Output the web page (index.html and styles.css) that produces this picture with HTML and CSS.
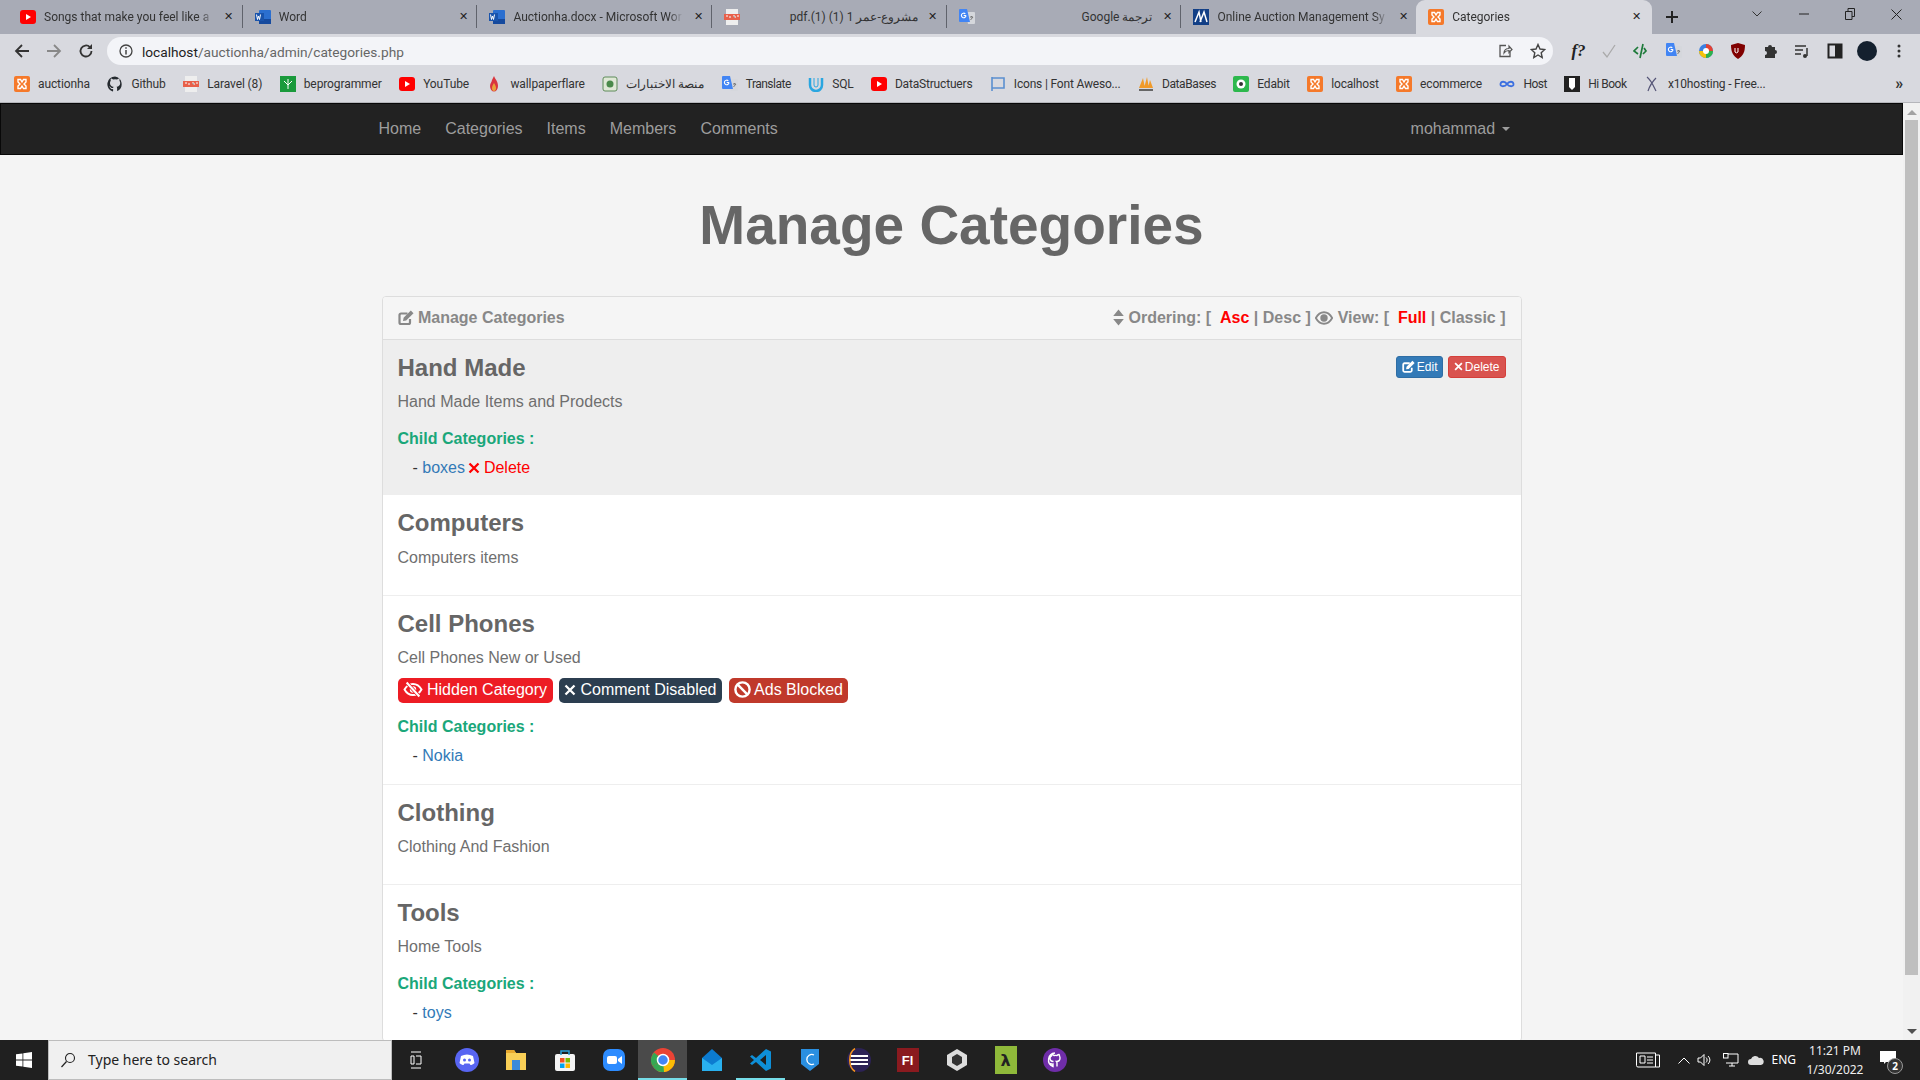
FILE: index.html
```html
<!DOCTYPE html>
<html lang="en">
<head>
<meta charset="utf-8">
<title>Categories</title>
<link rel="stylesheet" href="styles.css">
</head>
<body>
<svg class="defs" width="0" height="0" aria-hidden="true">
  <symbol id="xampp" viewBox="0 0 16 16"><rect width="16" height="16" rx="2" fill="#f5792a"/><path d="M4 3.500h2.500L8 6l1.500-2.500H12v2.500L10 8l2 2v2.500H9.500L8 10l-1.500 2.500H4V10l2-2-2-2z" fill="none" stroke="#fff" stroke-width="1.400"/></symbol>
  <symbol id="yt" viewBox="0 0 16 16"><rect y="1" width="16" height="14" rx="3" fill="#f00"/><path d="M6 5v6l5-3z" fill="#fff"/></symbol>
  <symbol id="word" viewBox="0 0 16 16"><rect x="4" y="1" width="12" height="14" rx="1" fill="#2b6fd0"/><rect x="4" y="10" width="12" height="5" fill="#164a9e"/><rect y="4" width="9" height="8" fill="#1a54ac"/><path d="M1.500 5.500l1 5 1-3.500 1 3.500 1-5" fill="none" stroke="#fff"/></symbol>
  <symbol id="pdf" viewBox="0 0 16 16"><rect x="2" width="12" height="16" fill="#eee"/><rect y="5" width="16" height="6" fill="#e8604a"/><path d="M2 7h2M6 7v2M9 7h2v2M13 7h2" stroke="#fff"/></symbol>
  <symbol id="gt" viewBox="0 0 16 16"><path d="M7 3h8a1 1 0 0 1 1 1v10a1 1 0 0 1-1 1H9z" fill="#d5d7dc"/><path d="M1 0h7l3 13H1a1 1 0 0 1-1-1V1a1 1 0 0 1 1-1z" fill="#4285f4"/><path d="M7 6.500a2.300 2.300 0 1 1-.7-1.700M4.700 6.500H7" fill="none" stroke="#fff" stroke-width="1.100"/><path d="M11 8h3M12.500 7v1M11.500 11l2.500-3" stroke="#777"/></symbol>
  <symbol id="edit" viewBox="0 0 16 16"><path d="M12 9.500V13a1.500 1.500 0 0 1-1.500 1.500H3A1.500 1.500 0 0 1 1.500 13V5.500A1.500 1.500 0 0 1 3 4h6.500" fill="none" stroke="currentColor" stroke-width="2.200"/><path d="M5 11.500l.6-3.200L12.800 1l2.700 2.700-7.300 7.300z" fill="currentColor"/></symbol>
  <symbol id="times" viewBox="0 0 12 12"><path d="M1.500 1.500l9 9M10.500 1.500l-9 9" stroke="currentColor" stroke-width="2.300" fill="none"/></symbol>
  <symbol id="sort" viewBox="0 0 10 16"><path d="M5 .5l5 6H0zM5 15.500l-5-6h10z" fill="currentColor"/></symbol>
  <symbol id="eye" viewBox="0 0 18 14"><path d="M.8 7C3 3 6 1.200 9 1.200S15 3 17.200 7C15 11 12 12.800 9 12.800S3 11 .8 7z" fill="none" stroke="currentColor" stroke-width="1.900"/><circle cx="9" cy="7" r="3.700" fill="currentColor"/></symbol>
  <symbol id="eyeoff" viewBox="0 0 18 16"><path d="M1 8c2-3.600 5-5.200 8-5.200S15 4.400 17 8c-2 3.600-5 5.200-8 5.200S3 11.600 1 8z" fill="none" stroke="currentColor" stroke-width="1.800"/><circle cx="9" cy="8" r="3" fill="currentColor"/><path d="M2.500 1l13 14" stroke="#ed1c24" stroke-width="3.500"/><path d="M3 1.500l12 13" stroke="currentColor" stroke-width="2"/></symbol>
  <symbol id="ban" viewBox="0 0 16 16"><circle cx="8" cy="8" r="6.700" fill="none" stroke="currentColor" stroke-width="2.300"/><path d="M3.500 3.500l9 9" stroke="currentColor" stroke-width="2.300"/></symbol>
</svg>

<header class="chrome">
  <div class="tabstrip">
    <div class="tab"><svg class="fav"><use href="#yt"/></svg><span class="tab-title">Songs that make you feel like a</span><span class="tab-x">✕</span></div>
    <div class="tab"><svg class="fav"><use href="#word"/></svg><span class="tab-title">Word</span><span class="tab-x">✕</span></div>
    <div class="tab"><svg class="fav"><use href="#word"/></svg><span class="tab-title">Auctionha.docx - Microsoft Wor</span><span class="tab-x">✕</span></div>
    <div class="tab"><svg class="fav"><use href="#pdf"/></svg><span class="tab-title rtl" dir="rtl">مشروع-عمر 1 (1) (1).pdf</span><span class="tab-x">✕</span></div>
    <div class="tab"><svg class="fav"><use href="#gt"/></svg><span class="tab-title rtl" dir="rtl">ترجمة Google</span><span class="tab-x">✕</span></div>
    <div class="tab tab-last"><svg class="fav" viewBox="0 0 16 16"><rect width="16" height="16" fill="#123f86"/><path d="M2 13L6 3l2 10M7 13l4-10 3 10" fill="none" stroke="#fff" stroke-width="1.500"/></svg><span class="tab-title">Online Auction Management Sy</span><span class="tab-x">✕</span></div>
    <div class="tab tab-active"><svg class="fav"><use href="#xampp"/></svg><span class="tab-title">Categories</span><span class="tab-x">✕</span></div>
    <div class="newtab"><svg width="12" height="12" viewBox="0 0 12 12"><path d="M6 0v12M0 6h12" stroke="#222" stroke-width="2"/></svg></div>
    <div class="winctl">
      <span class="wc"><svg width="10" height="6" viewBox="0 0 10 6"><path d="M.5.5L5 5 9.500.5" fill="none" stroke="#333"/></svg></span>
      <span class="wc"><svg width="10" height="2" viewBox="0 0 10 2"><path d="M0 1h10" stroke="#222"/></svg></span>
      <span class="wc"><svg width="10" height="12" viewBox="0 0 10 12"><path d="M.5 3.500h6.500v8H.5zM3 3.500V.5h6.500v8H7" fill="none" stroke="#222"/></svg></span>
      <span class="wc"><svg width="11" height="11" viewBox="0 0 11 11"><path d="M.5.5l10 10M10.500.5l-10 10" stroke="#222"/></svg></span>
    </div>
  </div>
  <div class="toolbar">
    <div class="navbtns">
      <svg class="tb" viewBox="0 0 16 16"><path d="M15 8H2M8 2L2 8l6 6" fill="none" stroke="#333" stroke-width="1.800"/></svg>
      <svg class="tb" viewBox="0 0 16 16"><path d="M1 8h13M8 2l6 6-6 6" fill="none" stroke="#888" stroke-width="1.800"/></svg>
      <svg class="tb" viewBox="0 0 16 16"><path d="M13.500 8a5.500 5.500 0 1 1-1.600-3.900" fill="none" stroke="#333" stroke-width="1.800"/><path d="M14 1v5H9z" fill="#333"/></svg>
    </div>
    <div class="omnibox">
      <svg class="info" viewBox="0 0 14 14"><circle cx="7" cy="7" r="6" fill="none" stroke="#444" stroke-width="1.300"/><path d="M7 6v4.500M7 3.300v1.500" stroke="#444" stroke-width="1.500"/></svg>
      <span class="url"><span class="url-host">localhost</span>/auctionha/admin/categories.php</span>
      <svg class="omni-ic" viewBox="0 0 16 16"><path d="M9 2.500h-6v11h10V9" fill="none" stroke="#555" stroke-width="1.300"/><path d="M7 10c0-3 2-4.500 5-4.500V3l3 3.500-3 3V7.500c-2 0-4 1-5 2.500z" fill="none" stroke="#555" stroke-width="1.200"/></svg>
      <svg class="omni-ic" viewBox="0 0 16 16"><path d="M8 1.500l2 4.500 4.800.5-3.600 3.200 1 4.800L8 12l-4.200 2.500 1-4.800L1.200 6.500 6 6z" fill="none" stroke="#444" stroke-width="1.400"/></svg>
    </div>
    <div class="exts">
      <span class="ext ext-f">f?</span>
      <span class="ext"><svg class="tb" viewBox="0 0 16 16"><path d="M2 9l4 5L14 2" fill="none" stroke="#aaa" stroke-width="1.300"/></svg></span>
      <span class="ext"><svg class="tb" viewBox="0 0 16 16"><path d="M5 4L1 8l4 3M10 1L7 15M11 5l2 3-3 3" fill="none" stroke="#1d7a3a" stroke-width="1.700"/></svg></span>
      <span class="ext"><svg class="tb"><use href="#gt"/></svg></span>
      <span class="ext"><svg class="tb" viewBox="0 0 16 16"><circle cx="8" cy="8" r="7" fill="#3b7fe0"/><path d="M8 8V1a7 7 0 0 1 7 7z" fill="#e34133"/><path d="M8 8h7a7 7 0 0 1-7 7z" fill="#2fb24a"/><path d="M8 8v7a7 7 0 0 1-7-7z" fill="#f4c20d"/><circle cx="8" cy="8" r="3" fill="#fff"/></svg></span>
      <span class="ext"><svg class="tb" viewBox="0 0 16 16"><path d="M8 0l7 2c0 7-2 11-7 14C3 13 1 9 1 2z" fill="#800000"/><path d="M5 5v4a2 2 0 0 0 3 0V5" fill="none" stroke="#fff"/></svg></span>
      <span class="ext"><svg class="tb" viewBox="0 0 16 16"><path d="M3 4h3a2 2 0 1 1 4 0h3v3a2 2 0 1 1 0 4v4H3v-3a2 2 0 1 0 0-4z" fill="#333"/></svg></span>
      <span class="ext"><svg class="tb" viewBox="0 0 16 16"><path d="M1 3h11M1 7h8M1 11h6" stroke="#333" stroke-width="1.500"/><path d="M13 5v8" stroke="#333" stroke-width="1.500"/><circle cx="11" cy="13" r="2" fill="#333"/></svg></span>
      <span class="ext"><svg class="tb" viewBox="0 0 16 16"><rect x="1.500" y="1.500" width="13" height="13" fill="none" stroke="#222" stroke-width="2"/><rect x="8" y="1.500" width="6.500" height="13" fill="#222"/></svg></span>
      <span class="ext"><span class="avatar"></span></span>
      <span class="ext"><svg width="4" height="14" viewBox="0 0 4 14"><circle cx="2" cy="2" r="1.500" fill="#333"/><circle cx="2" cy="7" r="1.500" fill="#333"/><circle cx="2" cy="12" r="1.500" fill="#333"/></svg></span>
    </div>
  </div>
  <div class="bookmarks">
    <span class="bm ls1"><svg class="fav"><use href="#xampp"/></svg>auctionha</span>
    <span class="bm ls1"><svg class="fav" viewBox="0 0 16 16"><path d="M8 .5a7.700 7.700 0 0 0-2.400 15c.4 0 .5-.2.500-.4v-2c-2.200.5-2.700-1-2.700-1-.4-1-.9-1.200-.9-1.200-.7-.5.100-.5.100-.5.800.1 1.200.8 1.200.8.700 1.200 1.900.9 2.300.7.100-.5.300-.9.500-1.100-1.800-.2-3.600-.9-3.600-4 0-.9.300-1.600.8-2.100-.1-.2-.4-1 .1-2.100 0 0 .7-.2 2.200.8a7.600 7.600 0 0 1 4 0c1.500-1 2.200-.8 2.200-.8.400 1.100.2 1.900.1 2.100.5.500.8 1.200.8 2.100 0 3.100-1.900 3.800-3.700 4 .3.300.6.700.6 1.500v2.200c0 .2.100.5.500.4A7.700 7.700 0 0 0 8 .5z" fill="#24292e"/></svg>Github</span>
    <span class="bm ls1"><svg class="fav"><use href="#pdf"/></svg>Laravel (8)</span>
    <span class="bm ls1"><svg class="fav" viewBox="0 0 16 16"><rect width="16" height="16" fill="#1a9a3c"/><path d="M8 3v10M4 5l4 4 4-4" stroke="#fff" fill="none"/></svg>beprogrammer</span>
    <span class="bm ls1"><svg class="fav"><use href="#yt"/></svg>YouTube</span>
    <span class="bm ls1"><svg class="fav" viewBox="0 0 16 16"><path d="M8 0c1 3 4 5 4 10a4 5.500 0 0 1-8 0C4 7 6 6 6 4z" fill="#d9363e"/><path d="M8 7c1 2 2 3 2 5a2 3 0 0 1-4 0c0-2 1-3 2-5z" fill="#e9a33a"/></svg>wallpaperflare</span>
    <span class="bm bm-ar"><svg class="fav" viewBox="0 0 16 16"><rect x="1" y="1" width="14" height="14" rx="2" fill="#dfe8d6" stroke="#5f8c5a"/><circle cx="8" cy="8" r="3.500" fill="#4a8a4a"/></svg><span dir="rtl">منصة الاختبارات</span></span>
    <span class="bm ls5"><svg class="fav"><use href="#gt"/></svg>Translate</span>
    <span class="bm"><svg class="fav" viewBox="0 0 16 16"><path d="M2 2v7a6 6 0 0 0 12 0V2" fill="none" stroke="#2aa6e0" stroke-width="2.500"/><path d="M6 2v7a2 2 0 0 0 4 0V2" fill="none" stroke="#2aa6e0"/></svg>SQL</span>
    <span class="bm"><svg class="fav"><use href="#yt"/></svg>DataStructuers</span>
    <span class="bm"><svg class="fav" viewBox="0 0 16 16"><path d="M2 1v14M2 2h12v10H2" fill="none" stroke="#5b8fd0" stroke-width="1.600"/></svg>Icons | Font Aweso...</span>
    <span class="bm ls4"><svg class="fav" viewBox="0 0 16 16"><path d="M1 12L5 2l2 10zM6 12l3-11 2 11zM10 12l2-8 3 8z" fill="#f09a2a"/><path d="M1 13h14v2H1z" fill="#666"/></svg>DataBases</span>
    <span class="bm"><svg class="fav" viewBox="0 0 16 16"><rect width="16" height="16" rx="2" fill="#2db84d"/><circle cx="8" cy="8" r="4.500" fill="#fff"/><circle cx="8" cy="8" r="2" fill="#333"/></svg>Edabit</span>
    <span class="bm"><svg class="fav"><use href="#xampp"/></svg>localhost</span>
    <span class="bm"><svg class="fav"><use href="#xampp"/></svg>ecommerce</span>
    <span class="bm ls5"><svg class="fav" viewBox="0 0 16 16"><path d="M8 8C6 5 2 5 1.500 8S6 11 8 8s6-3 6.500 0S10 11 8 8z" fill="none" stroke="#3b6fe0" stroke-width="1.800"/></svg>Host</span>
    <span class="bm ls5"><svg class="fav" viewBox="0 0 16 16"><rect width="16" height="16" fill="#222"/><path d="M5 2v9l3 3 3-3V2" fill="#fff"/></svg>Hi Book</span>
    <span class="bm"><svg class="fav" viewBox="0 0 16 16"><path d="M3 1c4 3 6 8 9 14M12 2C8 6 6 9 4 15" fill="none" stroke="#557" stroke-width="1.200"/></svg>x10hosting - Free...</span>
    <span class="bm-more">»</span>
  </div>
</header>

<div class="viewport">
  <div class="page">
    <nav class="navbar">
      <div class="container nav-inner">
        <ul class="nav-links">
          <li>Home</li><li>Categories</li><li>Items</li><li>Members</li><li>Comments</li>
        </ul>
        <div class="nav-user">mohammad <span class="caret"></span></div>
      </div>
    </nav>
    <main class="container">
      <h1 class="title">Manage Categories</h1>
      <section class="panel">
        <div class="panel-heading">
          <div class="ph-left"><svg class="ic ic-head"><use href="#edit"/></svg> Manage Categories</div>
          <div class="ph-right"><svg class="ic ic-sort"><use href="#sort"/></svg> Ordering: [ &nbsp;<span class="on">Asc</span> | Desc ] <svg class="ic ic-eye"><use href="#eye"/></svg> View: [ &nbsp;<span class="on">Full</span> | Classic ]</div>
        </div>
        <article class="cat cat-hover">
          <div class="cat-head">
            <h3>Hand Made</h3>
            <div class="btns">
              <span class="btn btn-blue"><svg class="ic ic-12"><use href="#edit"/></svg> Edit</span>
              <span class="btn btn-red"><svg class="ic ic-9"><use href="#times"/></svg> Delete</span>
            </div>
          </div>
          <p>Hand Made Items and Prodects</p>
          <h4 class="child">Child Categories :</h4>
          <div class="child-item">- <a class="link">boxes</a> <span class="del"><svg class="ic ic-12x"><use href="#times"/></svg> Delete</span></div>
        </article>
        <article class="cat">
          <div class="cat-head"><h3>Computers</h3></div>
          <p>Computers items</p>
        </article>
        <article class="cat">
          <div class="cat-head"><h3>Cell Phones</h3></div>
          <p>Cell Phones New or Used</p>
          <div class="labels">
            <span class="label label-red"><svg class="ic ic-eo"><use href="#eyeoff"/></svg> Hidden Category</span>
            <span class="label label-navy"><svg class="ic ic-12x"><use href="#times"/></svg> Comment Disabled</span>
            <span class="label label-brick"><svg class="ic ic-17"><use href="#ban"/></svg> Ads Blocked</span>
          </div>
          <h4 class="child">Child Categories :</h4>
          <div class="child-item">- <a class="link">Nokia</a></div>
        </article>
        <article class="cat">
          <div class="cat-head"><h3>Clothing</h3></div>
          <p>Clothing And Fashion</p>
        </article>
        <article class="cat">
          <div class="cat-head"><h3>Tools</h3></div>
          <p>Home Tools</p>
          <h4 class="child">Child Categories :</h4>
          <div class="child-item">- <a class="link">toys</a></div>
        </article>
      </section>
    </main>
  </div>
  <aside class="scrollbar">
    <span class="sb-up"></span>
    <span class="sb-thumb"></span>
    <span class="sb-down"></span>
  </aside>
</div>

<footer class="taskbar">
  <div class="start"><svg width="16" height="16" viewBox="0 0 16 16"><path d="M0 2.300l6.500-.9v6.200H0zM7.300 1.300L16 0v7.600H7.300zM0 8.400h6.500v6.200L0 13.700zM7.300 8.400H16V16l-8.700-1.300z" fill="#fff"/></svg></div>
  <div class="search"><svg width="16" height="16" viewBox="0 0 16 16"><circle cx="10" cy="6" r="4.500" fill="none" stroke="#222" stroke-width="1.100"/><path d="M6.500 9.500L1.500 15" stroke="#222" stroke-width="1.200"/></svg><span>Type here to search</span></div>
  <div class="apps">
    <span class="app app-tv"><svg width="12" height="18" viewBox="0 0 12 18"><path d="M1 1h10M1 17h10M1 5h3v8H1zM6 5h5M6 13h5M11 5v8" fill="none" stroke="#fff"/></svg></span>
    <span class="app"><svg class="app-ic" viewBox="0 0 24 24"><circle cx="12" cy="12" r="12" fill="#5865f2"/><path d="M6 8c4-2 8-2 12 0l1.500 7c-1.500 1.500-3 2-4 2l-1-1.500h-5l-1 1.500c-1 0-2.500-.5-4-2z" fill="#fff"/><circle cx="9.500" cy="12" r="1.500" fill="#5865f2"/><circle cx="14.500" cy="12" r="1.500" fill="#5865f2"/></svg></span>
    <span class="app"><svg class="app-ic" viewBox="0 0 24 24"><path d="M2 2h8l2 3h10v17H2z" fill="#f9cf56"/><path d="M2 2h8l2 3H2z" fill="#e8a92e"/><rect x="8" y="12" width="8" height="10" fill="#3b8ad9"/></svg></span>
    <span class="app"><svg class="app-ic" viewBox="0 0 24 24"><rect x="2" y="6" width="20" height="17" rx="2" fill="#f4f4f4"/><path d="M8 7V3h8v4" fill="none" stroke="#2a9fd8" stroke-width="1.500"/><rect x="7" y="10" width="4.500" height="4.500" fill="#f25022"/><rect x="12.500" y="10" width="4.500" height="4.500" fill="#7fba00"/><rect x="7" y="15.500" width="4.500" height="4.500" fill="#00a4ef"/><rect x="12.500" y="15.500" width="4.500" height="4.500" fill="#ffb900"/></svg></span>
    <span class="app"><svg class="app-ic" viewBox="0 0 24 24"><rect x="1" y="1" width="22" height="22" rx="7" fill="#2d8cff"/><rect x="5" y="8" width="10" height="8" rx="2" fill="#fff"/><path d="M16 11l4-3v8l-4-3z" fill="#fff"/></svg></span>
    <span class="app app-active"><svg class="app-ic" viewBox="0 0 24 24"><circle cx="12" cy="12" r="12" fill="#ea4335"/><path d="M12 12L1.500 18A12 12 0 0 1 3 4.500z" fill="#34a853"/><path d="M12 12h12a12 12 0 0 1-18 10.400z" fill="#fbbc05"/><path d="M12 12L1.600 18A12 12 0 0 0 13 24z" fill="#34a853"/><circle cx="12" cy="12" r="5.500" fill="#4285f4" stroke="#fff" stroke-width="1.500"/></svg></span>
    <span class="app"><svg class="app-ic" viewBox="0 0 24 24"><path d="M2 10L12 1l10 9v13H2z" fill="#0c7bd0"/><path d="M2 10l10 7 10-7v13H2z" fill="#29b0ee"/></svg></span>
    <span class="app app-open"><svg class="app-ic" viewBox="0 0 24 24"><path d="M17 1l5 2.500v17L17 23 7 14l-4 3-2-1.500L5 12 1 8.500 3 7l4 3z" fill="#0e8fd8"/><path d="M17 7v10l-6-5z" fill="#1f1f1f"/></svg></span>
    <span class="app"><svg class="app-ic" viewBox="0 0 24 24"><path d="M3 1h18v15l-9 7-9-7z" fill="#2a8fe0"/><path d="M16 7a5 5 0 1 0 0 9" fill="none" stroke="#fff" stroke-width="1.300"/></svg></span>
    <span class="app"><svg class="app-ic" viewBox="0 0 24 24"><circle cx="12" cy="12" r="12" fill="#2c2255"/><path d="M4 8h17M3 12h18M4 16h17" stroke="#fff" stroke-width="2"/><path d="M8 .5C1 5 1 19 8 23.500" fill="none" stroke="#f7941e" stroke-width="1.500"/></svg></span>
    <span class="app"><span class="flash">Fl</span></span>
    <span class="app"><svg class="app-ic" viewBox="0 0 24 24"><path d="M12 1l10 6v10l-10 6-10-6V7z" fill="#ddd"/><path d="M12 6l5 3v6l-5 3-5-3V9z" fill="#333"/></svg></span>
    <span class="app"><span class="lambda">λ</span></span>
    <span class="app"><svg class="app-ic" viewBox="0 0 24 24"><circle cx="12" cy="12" r="12" fill="#6f2da8"/><path d="M12 5a7 7 0 0 0-2 13.500V16c-2 .4-2.500-1-2.500-1M14 18.500V15c0-1-.5-1.500-.5-1.500 2 0 3.500-1 3.500-3.500 0-1-.5-2-.5-2s0-1-.5-1.500c-1 0-2 1-2 1a7 7 0 0 0-3 0s-1-1-2-1c-.5.500-.5 1.500-.5 1.500S7 9 7 10c0 2.500 1.500 3.500 3.500 3.500" fill="none" stroke="#fff" stroke-width="1.400"/></svg></span>
  </div>
  <div class="tray">
    <svg class="tray-news" width="24" height="16" viewBox="0 0 24 16"><path d="M.5 1h19v14H2a1.500 1.500 0 0 1-1.500-1.500zM19.500 3h4v12h-4" fill="none" stroke="#fff"/><path d="M4 4h5v7H4z" fill="none" stroke="#fff"/><path d="M11 5h6M11 8h6M11 11h6" stroke="#fff"/></svg>
    <svg class="tray-chev" width="12" height="7" viewBox="0 0 12 7"><path d="M.5 6.500L6 1l5.500 5.500" fill="none" stroke="#fff"/></svg>
    <svg class="tray-vol" width="16" height="14" viewBox="0 0 16 14"><path d="M1 5h2.500L7 1.500v11L3.500 9H1zM9 4.500c1.500 1.500 1.500 3.500 0 5M11 3c2.500 2.500 2.500 5.500 0 8" fill="none" stroke="#fff"/></svg>
    <svg class="tray-net" width="16" height="14" viewBox="0 0 16 14"><path d="M3 1h12v9H3M9 10v3M6 13h6" fill="none" stroke="#fff"/><rect x=".5" y=".5" width="4.500" height="4.500" fill="#202020" stroke="#fff"/></svg>
    <svg class="tray-cloud" width="16" height="10" viewBox="0 0 16 10"><path d="M3 10a3 3 0 0 1 0-6 4.500 4.500 0 0 1 8-1 3.500 3.500 0 0 1 2 7z" fill="#ddd"/></svg>
    <span class="tray-lang">ENG</span>
    <div class="clock"><div>11:21 PM</div><div>1/30/2022</div></div>
    <div class="notif"><svg width="16" height="13" viewBox="0 0 16 13"><path d="M0 0h16v11H6l-2 2v-2H0z" fill="#fff"/></svg><span class="badge-n">2</span></div>
  </div>
</footer>
</body>
</html>
```

FILE: styles.css
```css
* { box-sizing: border-box; }
html, body { height: 100%; }
body {
  margin: 0;
  height: 1080px;
  overflow: hidden;
  display: flex;
  flex-direction: column;
  font-family: "Liberation Sans", Arial, sans-serif;
  font-size: 16px;
  line-height: 1.42857;
  color: #666;
  background: #f4f4f4;
}
.defs { display: block; height: 0; }
svg { flex: none; }

/* browser chrome */
.chrome { flex: none; font-family: "Roboto", "Noto Sans", "Noto Sans CJK SC", sans-serif; font-size: 12px; color: #333; line-height: 16px; }
.tabstrip { height: 34px; background: #a8abb6; display: flex; align-items: flex-start; padding-left: 8px; }
.tab { width: 234.7px; flex: none; display: flex; align-items: center; padding: 0 6px 0 12px; gap: 8px; border-right: 1px solid #60636c; margin-top: 5px; height: 23px; }
.tab-last { border-right: 0; }
.tab-active { background: #d8d9df; border: 0; border-radius: 9px 9px 0 0; margin: 0; height: 34px; width: 236px; padding-right: 9px; }
.fav { width: 16px; height: 16px; display: block; flex: none; }
.tab-title { flex: 1; min-width: 0; white-space: nowrap; overflow: hidden; -webkit-mask-image: linear-gradient(90deg, #000 92%, transparent); mask-image: linear-gradient(90deg, #000 92%, transparent); }
.rtl { -webkit-mask-image: none; mask-image: none; text-align: right; }
.tab-x { width: 14px; text-align: center; font-size: 11px; color: #222; }
.newtab { width: 40px; height: 34px; display: flex; align-items: center; justify-content: center; }
.winctl { margin-left: auto; display: flex; }
.wc { width: 46.500px; height: 34px; display: flex; align-items: center; justify-content: center; padding-bottom: 6px; }

.toolbar { height: 34px; background: #d8d9df; display: flex; align-items: center; padding-right: 5px; }
.navbtns { width: 109px; padding-left: 14px; display: flex; gap: 16px; align-items: center; }
.tb { width: 16px; height: 16px; display: block; }
.omnibox { width: 1446px; flex: none; height: 28px; border-radius: 14px; background: #f3f4f8; display: flex; align-items: center; padding: 0 7px 0 12px; }
.info { width: 14px; height: 14px; margin-right: 9px; }
.url { flex: 1; font-size: 13.700px; color: #666; padding-top: 1px; }
.url-host { color: #222; }
.omni-ic { width: 16px; height: 16px; margin-left: 17px; }
.exts { display: flex; align-items: center; margin-left: 8px; }
.ext { width: 32.200px; display: flex; justify-content: center; align-items: center; }
.ext-f { font-family: "Liberation Serif", serif; font-style: italic; font-weight: bold; font-size: 17px; color: #222; padding-left: 3px; }
.avatar { width: 20px; height: 20px; border-radius: 50%; background: #14202e; display: block; }

.bookmarks { height: 35px; background: #d8d9df; border-bottom: 1px solid #b5b6bb; display: flex; align-items: center; padding: 0 0 2px 14px; gap: 17.400px; white-space: nowrap; letter-spacing: -.18px; }
.bm { display: flex; align-items: center; gap: 8px; }
.ls1 { letter-spacing: -.1px; }
.ls4 { letter-spacing: -.4px; }
.ls5 { letter-spacing: -.5px; }
.bm-more { margin-left: auto; margin-right: 17px; font-size: 16px; font-weight: bold; }

/* page */
.viewport { flex: 1; min-height: 0; display: flex; overflow: hidden; }
.page { width: 1903px; flex: none; }
.container { width: 1170px; margin: 0 auto; padding: 0 15px; }
.navbar { height: 52px; background: #222; border: 1px solid #080808; }
.nav-inner { display: flex; justify-content: space-between; height: 50px; align-items: center; }
.nav-links { display: flex; gap: 24px; list-style: none; margin: 0 0 0 -3px; padding: 0; color: #9d9d9d; }
.nav-user { color: #9d9d9d; margin-right: 12px; }
.caret { display: inline-block; width: 0; height: 0; margin-left: 2px; vertical-align: middle; border-top: 4px solid; border-left: 4px solid transparent; border-right: 4px solid transparent; }

.title { font-size: 55px; line-height: 1.1; font-weight: bold; text-align: center; color: #666; margin: 40px 0; }
.panel { background: #fff; border: 1px solid #ddd; border-radius: 4px; }
.panel-heading { display: flex; justify-content: space-between; align-items: center; height: 43px; padding: 1px 15px 0; background: #f5f5f5; border-bottom: 1px solid #ddd; border-radius: 3px 3px 0 0; color: #888; font-weight: bold; }
.on { color: #f00; }
.ic { display: inline-block; vertical-align: -2px; }
.ic-head { width: 16px; height: 17px; vertical-align: -3px; }
.ic-17 { width: 17px; height: 17px; vertical-align: -3px; }
.ic-12 { width: 13px; height: 13px; }
.ic-12x { width: 12px; height: 12px; vertical-align: -1px; }
.ic-9 { width: 9px; height: 9px; vertical-align: 0; }
.ic-sort { width: 11px; height: 17px; vertical-align: -3px; }
.ic-eye { width: 18px; height: 14px; }
.ic-eo { width: 20px; height: 17px; vertical-align: -3px; }

.cat { padding: 15px 15px 15px; border-bottom: 1px solid #eee; }
.cat-hover { background: #eee; }
.cat-head { display: flex; justify-content: space-between; align-items: flex-start; }
.cat h3 { font-size: 24px; line-height: 1.1; font-weight: bold; color: #666; margin: 0 0 10px; }
.cat p { margin: 0 0 10px; color: #6f6f6f; }
.btns { display: flex; gap: 5px; margin-top: 1px; }
.btn { display: block; height: 22px; padding: 0 5px; border-radius: 3px; font-size: 12px; color: #fff; word-spacing: -2px; }
.btn-blue { background: #337ab7; border: 1px solid #2e6da4; line-height: 20px; }
.btn-red { background: #d9534f; border: 1px solid #d43f3a; line-height: 20px; }
.child { font-size: 16px; line-height: 1.42857; font-weight: bold; color: #1aa77a; margin: 14px 0 6px; }
.labels { display: flex; gap: 6px; height: 25px; margin-top: -2px; }
.labels + .child { margin-top: 13px; }
.labels ~ .child-item { padding-bottom: 1px; }
.label { display: block; height: 25px; padding: 0 5px; border-radius: 5px; line-height: 24px; color: #fff; }
.label-red { background: #ed1c24; padding-right: 6px; }
.label-navy { background: #2c3e50; }
.label-brick { background: #c0392b; margin-left: 1px; }
.child-item { padding-left: 15px; color: #333; }
.link { color: #337ab7; }
.del { color: #f00; margin-left: -1px; word-spacing: -1px; }

.scrollbar { width: 17px; flex: none; background: #f1f1f1; display: flex; flex-direction: column; align-items: center; }
.sb-up { width: 0; height: 0; margin-top: 7px; border-left: 5px solid transparent; border-right: 5px solid transparent; border-bottom: 5px solid #a3a3a3; }
.sb-thumb { width: 13px; height: 855px; margin-top: 5px; background: #bfbfbf; }
.sb-down { width: 0; height: 0; margin-top: auto; margin-bottom: 6px; border-left: 5px solid transparent; border-right: 5px solid transparent; border-top: 5px solid #505050; }

/* taskbar */
.taskbar { flex: none; height: 40px; background: #202020; display: flex; align-items: center; color: #fff; font-family: "Noto Sans", "Open Sans", sans-serif; }
.start { width: 48px; display: flex; justify-content: center; }
.search { width: 344px; height: 40px; background: #f0f0f0; border: 1px solid #bdbdbd; display: flex; align-items: center; gap: 12px; padding-left: 11px; color: #222; font-size: 14px; }
.apps { display: flex; height: 40px; margin-left: 1px; }
.app { width: 49px; height: 40px; display: flex; align-items: center; justify-content: center; }
.app-tv { padding-right: 4px; }
.app-ic { width: 24px; height: 24px; }
.app-active { background: #4a4a4a; box-shadow: inset 0 -2px #76dde8; }
.app-open { box-shadow: inset 0 -2px #76dde8; }
.flash { width: 22px; height: 24px; background: #8a1a1f; color: #fff; font: bold 13px "Liberation Sans", sans-serif; display: flex; align-items: center; justify-content: center; }
.lambda { width: 22px; height: 28px; background: #8fb93a; color: #222; font: bold 16px "DejaVu Sans", sans-serif; display: flex; align-items: center; justify-content: center; }
.tray { margin-left: auto; display: flex; align-items: center; height: 40px; font-size: 12px; }
.tray-news { margin-right: 18px; }
.tray-chev { margin-right: 7px; }
.tray-vol { margin-right: 10px; }
.tray-net { margin-right: 9px; }
.tray-cloud { margin-right: 7px; }
.tray-lang { margin-right: 3px; }
.clock { width: 72px; text-align: center; line-height: 19px; margin-right: 8px; color: #eee; }
.notif { width: 41px; height: 30px; position: relative; display: flex; align-items: center; padding-left: 1px; padding-bottom: 6px; }
.badge-n { position: absolute; left: 8px; top: 13px; width: 16px; height: 16px; border-radius: 50%; background: #333; border: 1px solid #999; font-size: 10px; font-weight: bold; line-height: 14px; text-align: center; }
```
